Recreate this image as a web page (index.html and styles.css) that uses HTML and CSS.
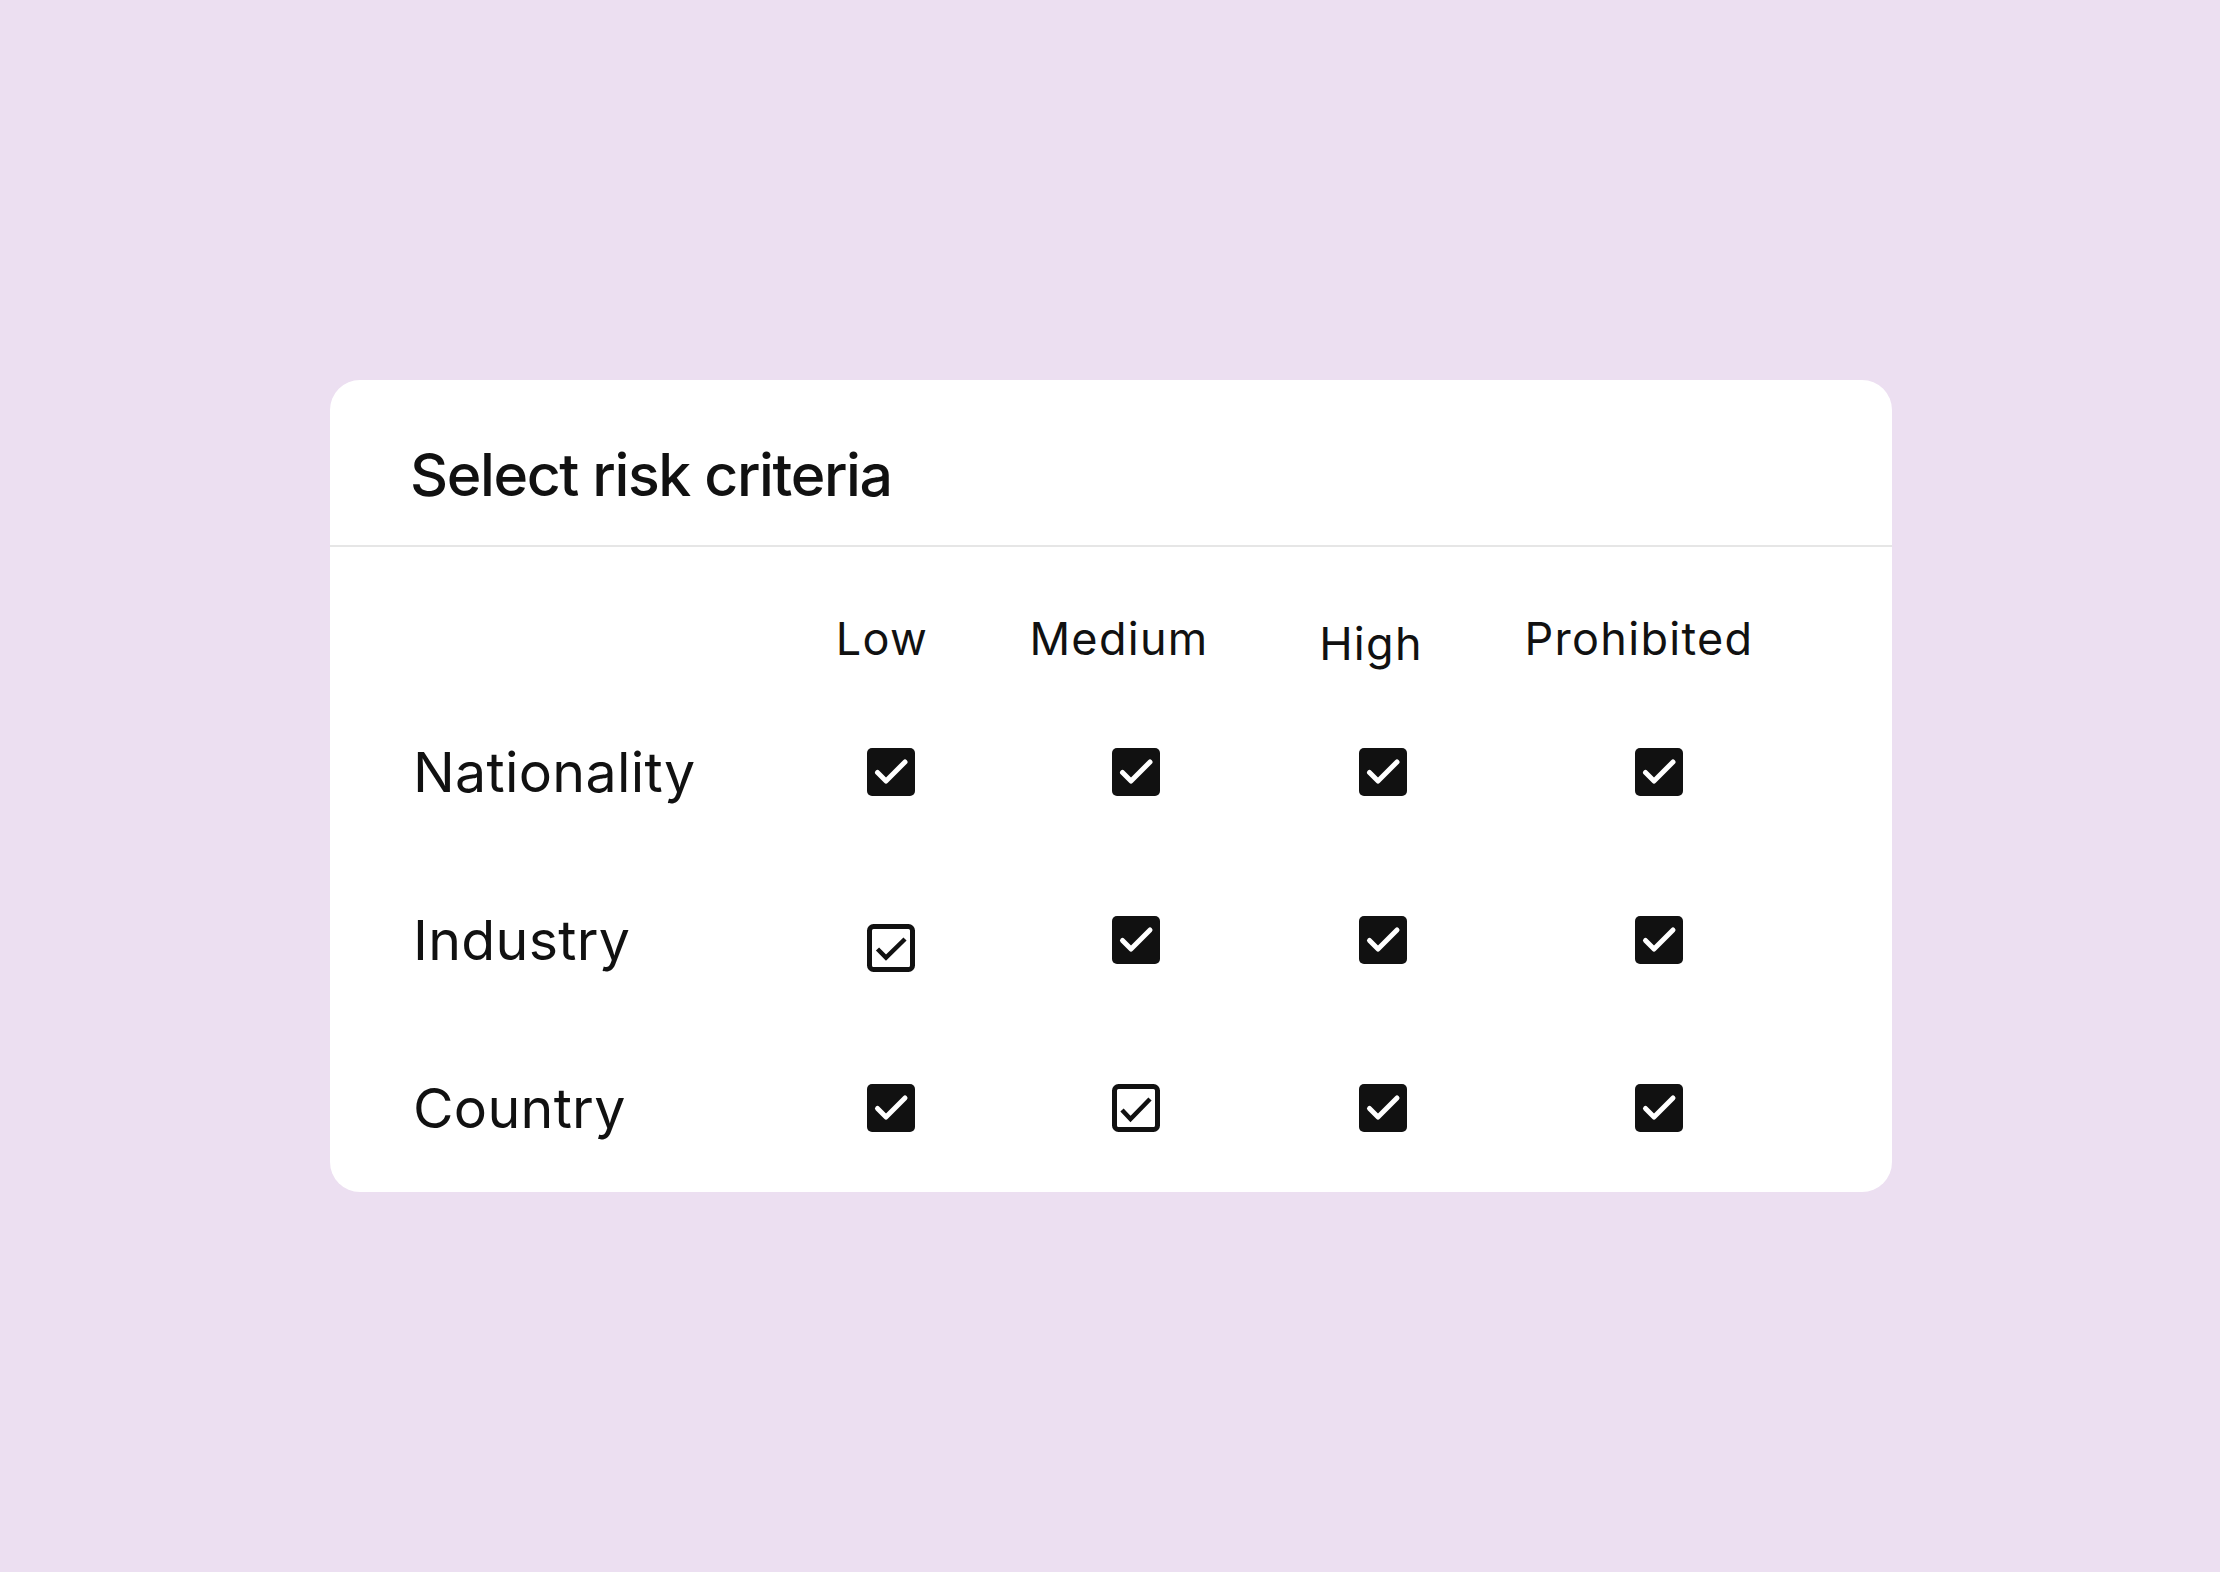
FILE: index.html
```html
<!DOCTYPE html>
<html lang="en">

<head>
    <meta charset="UTF-8">
    <meta name="viewport" content="width=device-width, initial-scale=1.0">
    <title>Select risk criteria</title>
    <link rel="stylesheet" href="styles.css">
</head>

<body>
    <section class="card">
        <header class="card-head">
            <h1>Select risk criteria</h1>
        </header>
        <div class="grid">
            <div class="head"></div>
            <div class="head head-low">Low</div>
            <div class="head head-medium">Medium</div>
            <div class="head head-high">High</div>
            <div class="head head-prohibited">Prohibited</div>

            <div class="label">Nationality</div>
            <div class="cell"><svg class="cb" viewBox="0 0 48 48"><rect width="48" height="48" rx="5" fill="#111"/><path d="M10.5 24.5 L19 33 L38 14" fill="none" stroke="#fff" stroke-width="5" stroke-linecap="round" stroke-linejoin="round"/></svg></div>
            <div class="cell"><svg class="cb" viewBox="0 0 48 48"><rect width="48" height="48" rx="5" fill="#111"/><path d="M10.5 24.5 L19 33 L38 14" fill="none" stroke="#fff" stroke-width="5" stroke-linecap="round" stroke-linejoin="round"/></svg></div>
            <div class="cell"><svg class="cb" viewBox="0 0 48 48"><rect width="48" height="48" rx="5" fill="#111"/><path d="M10.5 24.5 L19 33 L38 14" fill="none" stroke="#fff" stroke-width="5" stroke-linecap="round" stroke-linejoin="round"/></svg></div>
            <div class="cell"><svg class="cb" viewBox="0 0 48 48"><rect width="48" height="48" rx="5" fill="#111"/><path d="M10.5 24.5 L19 33 L38 14" fill="none" stroke="#fff" stroke-width="5" stroke-linecap="round" stroke-linejoin="round"/></svg></div>

            <div class="label">Industry</div>
            <div class="cell"><svg class="cb cb-low" viewBox="0 0 48 48"><rect x="2.5" y="2.5" width="43" height="43" rx="4" fill="#fff" stroke="#111" stroke-width="5"/><path d="M10.5 25 L19 33.5 L38 15" fill="none" stroke="#111" stroke-width="4.5"/></svg></div>
            <div class="cell"><svg class="cb" viewBox="0 0 48 48"><rect width="48" height="48" rx="5" fill="#111"/><path d="M10.5 24.5 L19 33 L38 14" fill="none" stroke="#fff" stroke-width="5" stroke-linecap="round" stroke-linejoin="round"/></svg></div>
            <div class="cell"><svg class="cb" viewBox="0 0 48 48"><rect width="48" height="48" rx="5" fill="#111"/><path d="M10.5 24.5 L19 33 L38 14" fill="none" stroke="#fff" stroke-width="5" stroke-linecap="round" stroke-linejoin="round"/></svg></div>
            <div class="cell"><svg class="cb" viewBox="0 0 48 48"><rect width="48" height="48" rx="5" fill="#111"/><path d="M10.5 24.5 L19 33 L38 14" fill="none" stroke="#fff" stroke-width="5" stroke-linecap="round" stroke-linejoin="round"/></svg></div>

            <div class="label">Country</div>
            <div class="cell"><svg class="cb" viewBox="0 0 48 48"><rect width="48" height="48" rx="5" fill="#111"/><path d="M10.5 24.5 L19 33 L38 14" fill="none" stroke="#fff" stroke-width="5" stroke-linecap="round" stroke-linejoin="round"/></svg></div>
            <div class="cell"><svg class="cb" viewBox="0 0 48 48"><rect x="2.5" y="2.5" width="43" height="43" rx="4" fill="#fff" stroke="#111" stroke-width="5"/><path d="M10 26 L18.5 35 L38 15" fill="none" stroke="#111" stroke-width="4.5"/></svg></div>
            <div class="cell"><svg class="cb" viewBox="0 0 48 48"><rect width="48" height="48" rx="5" fill="#111"/><path d="M10.5 24.5 L19 33 L38 14" fill="none" stroke="#fff" stroke-width="5" stroke-linecap="round" stroke-linejoin="round"/></svg></div>
            <div class="cell"><svg class="cb" viewBox="0 0 48 48"><rect width="48" height="48" rx="5" fill="#111"/><path d="M10.5 24.5 L19 33 L38 14" fill="none" stroke="#fff" stroke-width="5" stroke-linecap="round" stroke-linejoin="round"/></svg></div>
        </div>
    </section>
</body>

</html>
```

FILE: styles.css
```css
* {
    padding: 0;
    margin: 0;
    box-sizing: border-box;
}

body {
    min-height: 100vh;
    display: flex;
    align-items: center;
    justify-content: center;
    padding-left: 2px;
    background: #ecdff1;
    font-family: Inter, "Noto Sans", sans-serif;
    color: #111;
}

.card {
    width: 1562px;
    height: 812px;
    background: #fff;
    border-radius: 30px;
    overflow: hidden;
}

.card-head {
    height: 167px;
    padding: 60px 80px 0;
    border-bottom: 2px solid #e6e6e6;
}

.card-head h1 {
    font-size: 59px;
    font-weight: 500;
    line-height: 1.2;
    letter-spacing: -1.4px;
}

.grid {
    display: grid;
    grid-template-columns: 362px 244px 246px 248px 304px;
    grid-template-rows: 76px 168px 168px 168px;
    padding: 65px 0 0 77px;
    align-items: center;
}

.head {
    align-self: start;
    font-size: 45px;
    line-height: 1.2;
    letter-spacing: 1.3px;
    text-align: center;
}

.head-low {
    padding-right: 18px;
}

.head-medium {
    padding-right: 34px;
}

.head-high {
    padding-top: 5px;
    padding-right: 24px;
}

.head-prohibited {
    padding-right: 40px;
}

.label {
    font-size: 55.5px;
    line-height: 1.2;
    letter-spacing: 0.3px;
    padding-left: 6px;
}

.cell {
    display: flex;
    justify-content: center;
}

.cb {
    width: 48px;
    height: 48px;
    display: block;
}

.cb-low {
    margin-top: 16px;
}
```
